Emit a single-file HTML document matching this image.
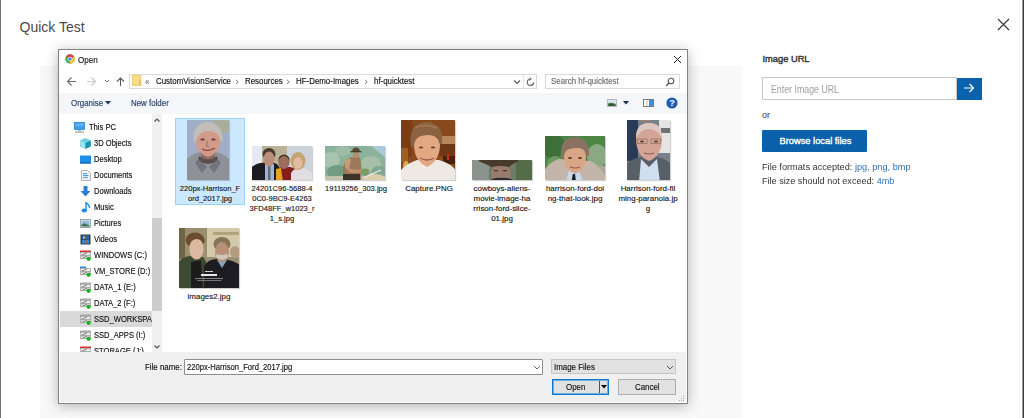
<!DOCTYPE html>
<html><head><meta charset="utf-8">
<style>
*{margin:0;padding:0;box-sizing:border-box}
html,body{width:1024px;height:418px;overflow:hidden;background:#fff}
body{position:relative;font-family:"Liberation Sans",sans-serif;color:#000}
.a{position:absolute}
.t{position:absolute;white-space:nowrap;line-height:1}
.d{font-size:8.6px;color:#111;transform:scaleX(.92);transform-origin:0 0;-webkit-text-stroke:.15px currentColor}
.nav{position:absolute;left:0;top:0;width:1024px;height:418px;clip-path:inset(114px 872px 66px 59px)}
.nav .t{font-size:8.6px;color:#111;transform:scaleX(.88);transform-origin:0 0;-webkit-text-stroke:.15px currentColor}
.fn{position:absolute;width:72px;text-align:center;font-size:7.6px;line-height:10px;color:#111;-webkit-text-stroke:.12px currentColor}
</style></head><body>
<!-- page edges -->
<div class="a" style="left:0;top:0;width:1px;height:418px;background:#727272"></div>
<div class="a" style="left:1022px;top:0;width:1px;height:418px;background:#9a9a9a"></div>
<div class="a" style="left:1023px;top:0;width:1px;height:418px;background:#3c3c3c"></div>

<div class="t" style="left:19.5px;top:20px;font-size:14px;color:#4a4a4a">Quick Test</div>
<svg class="a" style="left:997px;top:18px" width="13" height="13" viewBox="0 0 13 13"><path d="M1 1L12 12M12 1L1 12" stroke="#333" stroke-width="1.1" fill="none"/></svg>

<!-- gray body area -->
<div class="a" style="left:40px;top:66px;width:702px;height:352px;background:#f8f8f8"></div>

<!-- right panel -->
<div class="t" style="left:762.5px;top:54.6px;font-size:9.3px;color:#333;-webkit-text-stroke:.4px #333">Image URL</div>
<div class="a" style="left:762px;top:77px;width:195px;height:23px;border:1px solid #c8c8c8;background:#fff"></div>
<div class="t" style="left:771px;top:85px;font-size:10px;color:#a0a0a0;transform:scaleX(.88);transform-origin:0 0">Enter Image URL</div>
<div class="a" style="left:957px;top:78px;width:25px;height:22px;background:#0b62aa"></div>
<svg class="a" style="left:963px;top:83px" width="12" height="10" viewBox="0 0 12 10"><path d="M1 5H10.5M6.5 1L10.5 5L6.5 9" stroke="#fff" stroke-width="1.2" fill="none"/></svg>
<div class="t" style="left:762px;top:111px;font-size:9px;color:#333">or</div>
<div class="a" style="left:762px;top:130px;width:105px;height:22px;background:#0b62aa;border-radius:1px"></div>
<div class="t" style="left:779.5px;top:137px;font-size:9.3px;color:#fff;-webkit-text-stroke:.35px #fff">Browse local files</div>
<div class="t" style="left:762px;top:162.3px;font-size:9.9px;color:#333;transform:scaleX(.93);transform-origin:0 0">File formats accepted: <span style="color:#2f6fb5">jpg, png, bmp</span></div>
<div class="t" style="left:762px;top:175.6px;font-size:9.9px;color:#333;transform:scaleX(.92);transform-origin:0 0">File size should not exceed: <span style="color:#2f6fb5">4mb</span></div>

<!-- DIALOG -->
<div class="a" style="left:58px;top:49px;width:630px;height:355px;background:#fff;border:1px solid #828282;box-shadow:0 2px 12px rgba(0,0,0,.28)"></div>
<!-- chrome icon -->
<svg class="a" style="left:64.5px;top:54.3px" width="10" height="10" viewBox="0 0 22 22">
<circle cx="11" cy="11" r="10.5" fill="#4caf50"/>
<path d="M11 11 L2 6 A10.5 10.5 0 0 1 20.1 6 Z" fill="#db4437"/>
<path d="M11 11 L20.1 6 A10.5 10.5 0 0 1 11 21.5 Z" fill="#fbc02d"/>
<circle cx="11" cy="11" r="5" fill="#fff"/><circle cx="11" cy="11" r="3.8" fill="#4285f4"/>
</svg>
<div class="t d" style="left:78px;top:55px;font-size:9.8px;transform:scaleX(.82)">Open</div>
<svg class="a" style="left:673px;top:55px" width="9" height="9" viewBox="0 0 9 9"><path d="M1 1L8 8M8 1L1 8" stroke="#222" stroke-width="1" fill="none"/></svg>

<!-- nav buttons -->
<svg class="a" style="left:66px;top:76px" width="62" height="11" viewBox="0 0 62 11">
<path d="M1.5 5.5H10M5.5 1.5L1.5 5.5L5.5 9.5" stroke="#6b6b6b" stroke-width="1.1" fill="none"/>
<path d="M21 5.5H29.5M25.5 1.5L29.5 5.5L25.5 9.5" stroke="#c8c8c8" stroke-width="1.1" fill="none"/>
<path d="M39 4L41 6L43 4" stroke="#6b6b6b" stroke-width="1" fill="none"/>
<path d="M54.5 10V2M51 5.5L54.5 2L58 5.5" stroke="#5a5a5a" stroke-width="1.1" fill="none"/>
</svg>
<!-- address box -->
<div class="a" style="left:129px;top:74px;width:408px;height:15px;border:1px solid #d9d9d9;background:#fff"></div>
<div class="a" style="left:523px;top:75px;width:1px;height:13px;background:#e3e3e3"></div>
<svg class="a" style="left:132px;top:75px" width="10" height="11" viewBox="0 0 10 11"><rect x="0.3" y="0.3" width="8.6" height="10.4" fill="#f9dc88" stroke="#e6c062" stroke-width=".6"/><rect x="7.2" y="4.5" width="1.7" height="6.2" fill="#e8bf55"/></svg>
<div class="t d" style="left:145px;top:78px;color:#6b6b6b">«</div>
<div class="t d" style="left:156px;top:77px">CustomVisionService</div>
<svg class="a" style="left:235px;top:79px" width="5" height="6" viewBox="0 0 5 6"><path d="M1 0.8L3.2 2.9L1 5" stroke="#666" stroke-width=".9" fill="none"/></svg>
<div class="t d" style="left:245px;top:77px">Resources</div>
<svg class="a" style="left:286px;top:79px" width="5" height="6" viewBox="0 0 5 6"><path d="M1 0.8L3.2 2.9L1 5" stroke="#666" stroke-width=".9" fill="none"/></svg>
<div class="t d" style="left:296px;top:77px">HF-Demo-Images</div>
<svg class="a" style="left:364px;top:79px" width="5" height="6" viewBox="0 0 5 6"><path d="M1 0.8L3.2 2.9L1 5" stroke="#666" stroke-width=".9" fill="none"/></svg>
<div class="t d" style="left:374px;top:77px">hf-quicktest</div>
<svg class="a" style="left:513px;top:79px" width="8" height="6" viewBox="0 0 8 6"><path d="M1 1.5L4 4.5L7 1.5" stroke="#555" stroke-width="1.1" fill="none"/></svg>
<svg class="a" style="left:526px;top:77px" width="9" height="10" viewBox="0 0 9 10"><path d="M4.5 2A3.2 3.2 0 1 0 7.7 5.4" stroke="#666" stroke-width="1.1" fill="none"/><path d="M3.5 0.5L5.3 2L3.5 3.5" stroke="#666" fill="none"/></svg>
<!-- search box -->
<div class="a" style="left:545px;top:74px;width:135px;height:15px;border:1px solid #d9d9d9;background:#fff"></div>
<div class="t d" style="left:551px;top:77px;color:#6d6d6d">Search hf-quicktest</div>
<svg class="a" style="left:665px;top:77px" width="10" height="10" viewBox="0 0 10 10"><circle cx="6" cy="4" r="2.8" stroke="#555" stroke-width="1.1" fill="none"/><path d="M4 6L1 9" stroke="#555" stroke-width="1.3"/></svg>

<!-- command bar -->
<div class="a" style="left:59px;top:93px;width:628px;height:21px;background:#f4f6f9"></div>
<div class="t d" style="left:71px;top:99px;color:#1e3a5f">Organise</div>
<svg class="a" style="left:105px;top:101px" width="6" height="4" viewBox="0 0 6 4"><path d="M0 0H6L3 3.5Z" fill="#1e3a5f"/></svg>
<div class="t d" style="left:131px;top:99px;color:#1e3a5f">New folder</div>
<svg class="a" style="left:607px;top:99px" width="10" height="8" viewBox="0 0 10 8"><rect x="0.5" y="0.5" width="9" height="7" fill="#f4f4f4" stroke="#b8b8b8"/><rect x="1.2" y="1.2" width="7.6" height="5.6" fill="#cfe6f8"/><path d="M1.2 4.2Q4 3 8.8 5V6.8H1.2Z" fill="#4a7a4a"/><path d="M1.2 5.5Q4 4.8 8.8 6.2V6.8H1.2Z" fill="#2a4a2a"/></svg>
<svg class="a" style="left:623px;top:101px" width="6" height="4" viewBox="0 0 6 4"><path d="M0 0H6L3 3.5Z" fill="#1b2e4a"/></svg>
<svg class="a" style="left:643px;top:99px" width="11" height="8" viewBox="0 0 11 8"><rect x="0.5" y="0.5" width="10" height="7" fill="#fff" stroke="#7a7a7a"/><rect x="3" y="1" width="2" height="6" fill="#e0e0e0"/><rect x="6" y="1" width="4" height="6" fill="#3d8fe0"/></svg>
<svg class="a" style="left:666px;top:97px" width="12" height="12" viewBox="0 0 12 12"><circle cx="6" cy="6" r="5.6" fill="#1a5fb4"/><text x="6" y="9.3" font-family="Liberation Sans" font-weight="bold" font-size="9" fill="#fff" text-anchor="middle">?</text></svg>

<!-- nav pane -->
<div class="a" style="left:152px;top:114px;width:10px;height:238px;background:#f0f0f0"></div>
<div class="a" style="left:152px;top:218px;width:10px;height:93px;background:#cdcdcd"></div>
<svg class="a" style="left:154px;top:118px" width="6" height="4" viewBox="0 0 6 4"><path d="M0.5 3.5L3 1L5.5 3.5" stroke="#555" stroke-width="1.2" fill="none"/></svg>
<svg class="a" style="left:154px;top:345px" width="6" height="4" viewBox="0 0 6 4"><path d="M0.5 0.5L3 3L5.5 0.5" stroke="#555" stroke-width="1.2" fill="none"/></svg>
<div class="a" style="left:60px;top:311px;width:92px;height:16px;background:#d9d9d9"></div>
<div class="nav">
<svg class="a" style="left:74px;top:122px" width="11" height="11" viewBox="0 0 11 11"><rect x="0.5" y="0.5" width="10" height="7" fill="#3aa0f0" stroke="#2680c8" stroke-width="0.8"/><rect x="1.5" y="1.5" width="8" height="2.5" fill="#7cc4ff" opacity=".6"/><rect x="4" y="8" width="3" height="1.2" fill="#b8c4cc"/><rect x="1" y="9.3" width="9" height="1.5" fill="#a8b4bc"/></svg>
<div class="t" style="left:89px;top:119px;line-height:16px">This PC</div>
<svg class="a" style="left:80px;top:138px" width="11" height="11" viewBox="0 0 11 11"><path d="M5.5 0.3L10.6 2.6V8.4L5.5 10.7L0.4 8.4V2.6Z" fill="#2bb0c8"/><path d="M0.4 2.6L5.5 4.9V10.7L0.4 8.4Z" fill="#9fe3ee"/><path d="M5.5 4.9L10.6 2.6V8.4L5.5 10.7Z" fill="#1394b0"/><path d="M0.4 2.6L5.5 0.3L10.6 2.6L5.5 4.9Z" fill="#6fd4e4"/></svg>
<div class="t" style="left:94px;top:135px;line-height:16px">3D Objects</div>
<svg class="a" style="left:80px;top:154px" width="11" height="11" viewBox="0 0 11 11"><rect x="0" y="1.5" width="11" height="8" fill="#1e8fe6"/><rect x="0" y="8.3" width="11" height="1.2" fill="#0f63b0"/></svg>
<div class="t" style="left:94px;top:151px;line-height:16px">Desktop</div>
<svg class="a" style="left:81px;top:170px" width="10" height="11" viewBox="0 0 10 11"><path d="M0.5 0.5H6.5L9.5 3.5V10.5H0.5Z" fill="#f4f4f4" stroke="#a0a0a0" stroke-width="0.8"/><rect x="2" y="3" width="4" height="1.2" fill="#4aa0e0"/><rect x="2" y="5" width="5.5" height="1.2" fill="#4aa0e0"/><rect x="2" y="7" width="5" height="1.2" fill="#60b0e8"/></svg>
<div class="t" style="left:94px;top:167px;line-height:16px">Documents</div>
<svg class="a" style="left:80px;top:186px" width="11" height="11" viewBox="0 0 11 11"><path d="M3.5 0H7.5V5H10.5L5.5 10.5L0.5 5H3.5Z" fill="#2a7fd4"/></svg>
<div class="t" style="left:94px;top:183px;line-height:16px">Downloads</div>
<svg class="a" style="left:81px;top:202px" width="10" height="11" viewBox="0 0 10 11"><ellipse cx="3.2" cy="8.6" rx="2.6" ry="2" fill="#1a8ae6"/><path d="M5 8.5V0.5C6.5 2.5 8.8 3 8.5 6" stroke="#1a8ae6" stroke-width="1.4" fill="none"/></svg>
<div class="t" style="left:94px;top:199px;line-height:16px">Music</div>
<svg class="a" style="left:80px;top:218px" width="11" height="11" viewBox="0 0 11 11"><rect x="0.5" y="1.5" width="10" height="8" fill="#f0f0f0" stroke="#909090" stroke-width="0.8"/><rect x="1.5" y="2.5" width="8" height="6" fill="#8ec0e8"/><path d="M1.5 6.5L4.5 5.2L9.5 7.5V8.5H1.5Z" fill="#3a7a5a"/></svg>
<div class="t" style="left:94px;top:215px;line-height:16px">Pictures</div>
<svg class="a" style="left:80px;top:234px" width="11" height="11" viewBox="0 0 11 11"><rect x="0.5" y="0.5" width="10" height="10" fill="#3a3a3a"/><rect x="2" y="1.5" width="7" height="3.8" fill="#1e6ab8"/><rect x="2" y="5.8" width="7" height="3.8" fill="#2a88d8"/><rect x="3" y="2.5" width="2" height="2" fill="#e0c040"/><rect x="5.5" y="6.5" width="2" height="2" fill="#d04a30"/></svg>
<div class="t" style="left:94px;top:231px;line-height:16px">Videos</div>
<svg class="a" style="left:80px;top:250px" width="11" height="11" viewBox="0 0 11 11"><rect x="0" y="0.5" width="11" height="1.6" fill="#e03030"/><rect x="0.5" y="2.5" width="10" height="3" fill="#ececec" stroke="#9a9a9a" stroke-width="0.7"/><rect x="0.5" y="5.8" width="10" height="3" fill="#e2e2e2" stroke="#9a9a9a" stroke-width="0.7"/><path d="M2 5L7 3M2 8.3L7 6.3" stroke="#6a6a6a" stroke-width="0.8"/><circle cx="8.6" cy="8.8" r="2.1" fill="#13b513"/></svg>
<div class="t" style="left:94px;top:247px;line-height:16px">WINDOWS (C:)</div>
<svg class="a" style="left:80px;top:266px" width="11" height="11" viewBox="0 0 11 11"><rect x="0" y="0.5" width="6" height="1.6" fill="#2a8ad0"/><rect x="0.5" y="2.5" width="10" height="3" fill="#ececec" stroke="#9a9a9a" stroke-width="0.7"/><rect x="0.5" y="5.8" width="10" height="3" fill="#e2e2e2" stroke="#9a9a9a" stroke-width="0.7"/><path d="M2 5L7 3M2 8.3L7 6.3" stroke="#6a6a6a" stroke-width="0.8"/><circle cx="8.6" cy="8.8" r="2.1" fill="#13b513"/></svg>
<div class="t" style="left:94px;top:263px;line-height:16px">VM_STORE (D:)</div>
<svg class="a" style="left:80px;top:282px" width="11" height="11" viewBox="0 0 11 11"><rect x="0" y="0.5" width="11" height="1.6" fill="#a8a8a8"/><rect x="0.5" y="2.5" width="10" height="3" fill="#ececec" stroke="#9a9a9a" stroke-width="0.7"/><rect x="0.5" y="5.8" width="10" height="3" fill="#e2e2e2" stroke="#9a9a9a" stroke-width="0.7"/><path d="M2 5L7 3M2 8.3L7 6.3" stroke="#6a6a6a" stroke-width="0.8"/><circle cx="8.6" cy="8.8" r="2.1" fill="#13b513"/></svg>
<div class="t" style="left:94px;top:279px;line-height:16px">DATA_1 (E:)</div>
<svg class="a" style="left:80px;top:298px" width="11" height="11" viewBox="0 0 11 11"><rect x="0" y="0.5" width="11" height="1.6" fill="#a8a8a8"/><rect x="0.5" y="2.5" width="10" height="3" fill="#ececec" stroke="#9a9a9a" stroke-width="0.7"/><rect x="0.5" y="5.8" width="10" height="3" fill="#e2e2e2" stroke="#9a9a9a" stroke-width="0.7"/><path d="M2 5L7 3M2 8.3L7 6.3" stroke="#6a6a6a" stroke-width="0.8"/><circle cx="8.6" cy="8.8" r="2.1" fill="#13b513"/></svg>
<div class="t" style="left:94px;top:295px;line-height:16px">DATA_2 (F:)</div>
<svg class="a" style="left:80px;top:314px" width="11" height="11" viewBox="0 0 11 11"><rect x="0" y="0.5" width="11" height="1.6" fill="#a8a8a8"/><rect x="0.5" y="2.5" width="10" height="3" fill="#ececec" stroke="#9a9a9a" stroke-width="0.7"/><rect x="0.5" y="5.8" width="10" height="3" fill="#e2e2e2" stroke="#9a9a9a" stroke-width="0.7"/><path d="M2 5L7 3M2 8.3L7 6.3" stroke="#6a6a6a" stroke-width="0.8"/><circle cx="8.6" cy="8.8" r="2.1" fill="#13b513"/></svg>
<div class="t" style="left:94px;top:311px;line-height:16px">SSD_WORKSPAC</div>
<svg class="a" style="left:80px;top:330px" width="11" height="11" viewBox="0 0 11 11"><rect x="0" y="0.5" width="11" height="1.6" fill="#a8a8a8"/><rect x="0.5" y="2.5" width="10" height="3" fill="#ececec" stroke="#9a9a9a" stroke-width="0.7"/><rect x="0.5" y="5.8" width="10" height="3" fill="#e2e2e2" stroke="#9a9a9a" stroke-width="0.7"/><path d="M2 5L7 3M2 8.3L7 6.3" stroke="#6a6a6a" stroke-width="0.8"/><circle cx="8.6" cy="8.8" r="2.1" fill="#13b513"/></svg>
<div class="t" style="left:94px;top:327px;line-height:16px">SSD_APPS (I:)</div>
<svg class="a" style="left:80px;top:346px" width="11" height="11" viewBox="0 0 11 11"><rect x="0" y="0.5" width="11" height="1.6" fill="#e03030"/><rect x="0.5" y="2.5" width="10" height="3" fill="#ececec" stroke="#9a9a9a" stroke-width="0.7"/><rect x="0.5" y="5.8" width="10" height="3" fill="#e2e2e2" stroke="#9a9a9a" stroke-width="0.7"/><path d="M2 5L7 3M2 8.3L7 6.3" stroke="#6a6a6a" stroke-width="0.8"/><circle cx="8.6" cy="8.8" r="2.1" fill="#13b513"/></svg>
<div class="t" style="left:94px;top:343px;line-height:16px">STORAGE (J:)</div>
</div>
<!-- endnav -->

<!-- content files -->
<div id="files">
<div class="a" style="left:175px;top:118px;width:70px;height:87px;background:#cce8ff;border:1px solid #99d1ff"></div>
<svg class="a" style="left:187px;top:120px;box-shadow:1px 1px 1px rgba(0,0,0,.18)" width="42" height="60" viewBox="0 0 42 60"><defs><filter id="f1" x="-10%" y="-10%" width="120%" height="120%"><feGaussianBlur stdDeviation="0.7"/></filter><clipPath id="cf1"><rect width="42" height="60"/></clipPath></defs><g clip-path="url(#cf1)"><g filter="url(#f1)"><rect x="-3" y="-3" width="48" height="66" fill="#a0aec6"/>
<rect x="27" y="-3" width="18" height="16" fill="#a9ad9c"/>
<path d="M-2 62 V41 Q4 34 13 32 L29 32 Q38 34 44 41 V62Z" fill="#8f9199"/>
<path d="M14 30 H28 V38 Q21 42 14 38Z" fill="#8c6a5e"/>
<path d="M12 36 Q21 43 30 36 L31 41 Q21 47 11 41Z" fill="#5a5050"/>
<path d="M11 39 L20 47 L15 53 L8 43Z" fill="#72747c"/><path d="M31 39 L22 47 L27 53 L34 43Z" fill="#72747c"/>
<path d="M9 22 Q9 8 21 8 Q33 8 33 22 Q33 33 21 37 Q9 33 9 22Z" fill="#d29a88"/>
<path d="M7 24 Q4 4 20 2 Q36 2 36 22 L33 20 Q31 11 22 11 Q13 11 10 19Z" fill="#c2bdb8"/>
<ellipse cx="15.5" cy="19.5" rx="2.2" ry="1.1" fill="#5a3a34"/><ellipse cx="26.5" cy="19.5" rx="2.2" ry="1.1" fill="#5a3a34"/>
<path d="M20.5 21 L19 26 L22 26.5" stroke="#9a6858" stroke-width=".9" fill="none"/>
<path d="M15 29 Q21 32 28 28" stroke="#7a4438" stroke-width="1.3" fill="none"/></g></g></svg>
<svg class="a" style="left:252px;top:146px;box-shadow:1px 1px 1px rgba(0,0,0,.18)" width="60" height="34" viewBox="0 0 60 34"><defs><filter id="f2" x="-10%" y="-10%" width="120%" height="120%"><feGaussianBlur stdDeviation="0.7"/></filter><clipPath id="cf2"><rect width="60" height="34"/></clipPath></defs><g clip-path="url(#cf2)"><g filter="url(#f2)"><rect x="-3" y="-3" width="66" height="40" fill="#cdd3da"/>
<rect x="-3" y="-3" width="13" height="40" fill="#e6eaf0"/>
<rect x="10" y="-3" width="25" height="40" fill="#b9b198"/>
<path d="M-2 36 V22 Q6 16 14 17 L22 17 Q27 18 28 24 V36Z" fill="#1a1a20"/>
<rect x="13" y="18" width="9" height="17" fill="#9fb5d5"/>
<rect x="16" y="20" width="2.5" height="14" fill="#666a72"/>
<ellipse cx="17" cy="8" rx="6.5" ry="6" fill="#4a3a30"/>
<ellipse cx="17" cy="13" rx="5.5" ry="7.5" fill="#b98f7c"/>
<path d="M24 36 V24 Q28 20 33 21 L38 21 Q44 22 46 27 V36Z" fill="#861c1c"/>
<path d="M24 36 V23 L29 22 L31 36Z" fill="#e2a424"/>
<ellipse cx="32" cy="14" rx="5.5" ry="5.5" fill="#3a302a"/>
<ellipse cx="32" cy="16.5" rx="5.5" ry="6.5" fill="#9a6e5a"/>
<path d="M39 36 V27 Q42 22 48 22 Q56 22 60 27 V36Z" fill="#e2dde2"/>
<ellipse cx="46" cy="15" rx="7.5" ry="9" fill="#c6a472"/>
<ellipse cx="46" cy="17" rx="4.5" ry="6" fill="#e2baa0"/></g></g></svg>
<svg class="a" style="left:325px;top:146px;box-shadow:1px 1px 1px rgba(0,0,0,.18)" width="60" height="34" viewBox="0 0 60 34"><defs><filter id="f3" x="-10%" y="-10%" width="120%" height="120%"><feGaussianBlur stdDeviation="0.7"/></filter><clipPath id="cf3"><rect width="60" height="34"/></clipPath></defs><g clip-path="url(#cf3)"><g filter="url(#f3)"><rect x="-3" y="-3" width="66" height="40" fill="#8db29c"/>
<ellipse cx="6" cy="14" rx="9" ry="8" fill="#a9c4ae"/>
<ellipse cx="12" cy="26" rx="10" ry="7" fill="#6f9c82"/>
<ellipse cx="46" cy="18" rx="10" ry="8" fill="#a6c0a8"/>
<ellipse cx="54" cy="26" rx="8" ry="6" fill="#7ea890"/>
<ellipse cx="18" cy="5" rx="8" ry="5" fill="#9ebca6"/>
<path d="M42 -3 H63 V14 Q54 6 42 -3Z" fill="#a8c8dc"/>
<rect x="-3" y="30" width="66" height="7" fill="#c2c2a8"/>
<path d="M38 34 L46 27 Q54 28 62 31 V36 H38Z" fill="#dccdab"/>
<path d="M18 34 V21 Q21 12 27 11 L34 11 Q37 15 36 24 L36 34Z" fill="#9b7a5c"/>
<path d="M20 14 Q23 12 26 13 L24 24 Q21 24 20 20Z" fill="#c89a78"/>
<path d="M23 22 Q30 25 44 23 L44 25.5 Q30 28 23 26Z" fill="#c09070"/>
<ellipse cx="40" cy="26" rx="4" ry="3.5" fill="#6a9a58" opacity=".8"/>
<rect x="18" y="28" width="17" height="7" fill="#3e3026"/>
<ellipse cx="31" cy="9" rx="2.8" ry="3.3" fill="#b88c6c"/>
<path d="M27 5.5 Q27.5 1.5 31 1.5 Q34.5 1.5 35 5.5Z" fill="#5a4634"/>
<rect x="25.5" y="5" width="11" height="1.3" fill="#4a3a2c"/>
<path d="M38 32 L56 24" stroke="#e8ecec" stroke-width="1.1"/></g></g></svg>
<svg class="a" style="left:401px;top:120px;box-shadow:1px 1px 1px rgba(0,0,0,.18)" width="54" height="60" viewBox="0 0 54 60"><defs><filter id="f4" x="-10%" y="-10%" width="120%" height="120%"><feGaussianBlur stdDeviation="0.7"/></filter><clipPath id="cf4"><rect width="54" height="60"/></clipPath></defs><g clip-path="url(#cf4)"><g filter="url(#f4)"><rect x="-3" y="-3" width="60" height="66" fill="#8a4a1a"/>
<rect x="36" y="16" width="21" height="8" fill="#b8885a"/>
<rect x="36" y="24" width="21" height="12" fill="#6e3814"/>
<rect x="-3" y="-3" width="14" height="40" fill="#7a3e14"/>
<rect x="-3" y="28" width="10" height="14" fill="#9a6028"/>
<ellipse cx="5" cy="46" rx="3" ry="5" fill="#e0a848"/>
<rect x="42" y="36" width="15" height="8" fill="#4a2410"/>
<rect x="46" y="34" width="2" height="6" fill="#c03020"/>
<path d="M-2 62 V52 Q6 43 16 40 L38 40 Q50 43 56 52 V62Z" fill="#efe9e4"/>
<path d="M13 24 Q13 12 26 12 Q39 12 39 24 Q39 41 26 47 Q13 41 13 24Z" fill="#e2a882"/>
<path d="M10 27 Q6 4 25 2 Q43 2 41 25 L38 23 Q37 15 27 15 Q17 15 14 21 L12 28Z" fill="#8b6242"/>
<path d="M14 8 Q24 3 36 8" stroke="#a87a52" stroke-width="1.6" fill="none"/>
<ellipse cx="20" cy="27.5" rx="2.2" ry="1.1" fill="#6a4030"/><ellipse cx="32" cy="27.5" rx="2.2" ry="1.1" fill="#6a4030"/>
<path d="M19 38 Q26 42 33 38" stroke="#a05848" stroke-width="1.4" fill="none"/></g></g></svg>
<svg class="a" style="left:472px;top:160px;box-shadow:1px 1px 1px rgba(0,0,0,.18)" width="60" height="20" viewBox="0 0 60 20"><defs><filter id="f5" x="-10%" y="-10%" width="120%" height="120%"><feGaussianBlur stdDeviation="0.7"/></filter><clipPath id="cf5"><rect width="60" height="20"/></clipPath></defs><g clip-path="url(#cf5)"><g filter="url(#f5)"><rect x="-3" y="-3" width="66" height="26" fill="#6e7d68"/>
<rect x="-3" y="-3" width="20" height="26" fill="#8b948c"/>
<rect x="44" y="-3" width="19" height="26" fill="#546c48"/>
<ellipse cx="29" cy="14" rx="10" ry="10" fill="#9a7c6c"/>
<path d="M6 1 Q10 -2 28 -1 Q44 -2 47 1 Q40 4 37 7 Q28 5 20 7 Q14 4 6 1Z" fill="#4a3a2c"/>
<rect x="22" y="10" width="4" height="1.3" fill="#4a3830"/><rect x="31" y="10" width="4" height="1.3" fill="#4a3830"/>
<path d="M16 22 Q22 17 29 18 Q38 17 44 22Z" fill="#2c2a30"/></g></g></svg>
<svg class="a" style="left:545px;top:136px;box-shadow:1px 1px 1px rgba(0,0,0,.18)" width="60" height="44" viewBox="0 0 60 44"><defs><filter id="f6" x="-10%" y="-10%" width="120%" height="120%"><feGaussianBlur stdDeviation="0.7"/></filter><clipPath id="cf6"><rect width="60" height="44"/></clipPath></defs><g clip-path="url(#cf6)"><g filter="url(#f6)"><rect x="-3" y="-3" width="66" height="50" fill="#4f8446"/>
<ellipse cx="8" cy="10" rx="12" ry="12" fill="#3e7038"/>
<ellipse cx="10" cy="28" rx="8" ry="8" fill="#6a9a5e"/>
<ellipse cx="52" cy="20" rx="10" ry="12" fill="#8aa882"/>
<rect x="48" y="30" width="14" height="16" fill="#a8a898"/>
<path d="M-2 46 V36 Q4 26 14 23 L46 25 Q54 29 60 40 V46Z" fill="#c4b5aa"/>
<path d="M21 46 L24 34 L34 34 L38 46Z" fill="#cad9ea"/>
<path d="M26.5 46 L27.8 38 L30 38 L31 46Z" fill="#1c1c28"/>
<path d="M19 21 Q19 9 30 9 Q41 9 41 21 Q41 34 30 38 Q19 34 19 21Z" fill="#d8a686"/>
<path d="M16 22 Q14 2 30 1 Q45 2 44 20 L41 19 Q40 11 31 12 Q21 12 19 18 L18 23Z" fill="#8a7262"/>
<ellipse cx="25" cy="22" rx="2" ry="1" fill="#5a3a2a"/><ellipse cx="35" cy="22" rx="2" ry="1" fill="#5a3a2a"/>
<path d="M25 31 Q30 33 35 31" stroke="#9a5a48" stroke-width="1.1" fill="none"/></g></g></svg>
<svg class="a" style="left:627px;top:120px;box-shadow:1px 1px 1px rgba(0,0,0,.18)" width="43" height="60" viewBox="0 0 43 60"><defs><filter id="f7" x="-10%" y="-10%" width="120%" height="120%"><feGaussianBlur stdDeviation="0.7"/></filter><clipPath id="cf7"><rect width="43" height="60"/></clipPath></defs><g clip-path="url(#cf7)"><g filter="url(#f7)"><rect x="-3" y="-3" width="50" height="66" fill="#7a8088"/>
<rect x="-3" y="-3" width="14" height="44" fill="#2c3a58"/>
<rect x="32" y="-3" width="14" height="36" fill="#e4e4e2"/>
<rect x="34" y="8" width="12" height="5" fill="#707070"/>
<ellipse cx="18" cy="-1" rx="6" ry="3" fill="#a08070"/>
<path d="M-2 62 V45 Q6 38 14 37 L30 37 Q40 39 45 45 V62Z" fill="#585e66"/>
<path d="M12 62 L14 39 L22 47 L30 39 L33 62Z" fill="#cfdff0"/>
<path d="M9 18 Q9 3 22 3 Q35 3 35 18 Q35 36 22 41 Q9 36 9 18Z" fill="#d4a596"/>
<path d="M9 18 Q9 3 22 3 Q35 3 35 18 Q30 9 22 9 Q14 9 9 18Z" fill="#dcc8c0"/>
<path d="M10 19 H20 V23.5 H11Z M24 19 H34 L33 23.5 H24Z" fill="none" stroke="#8a6a5a" stroke-width=".7"/>
<ellipse cx="15" cy="21.5" rx="2" ry="1" fill="#5a3a30"/><ellipse cx="29" cy="21.5" rx="2" ry="1" fill="#5a3a30"/>
<path d="M17 33 Q22 35 27 33" stroke="#8a5a50" stroke-width="1.2" fill="none"/></g></g></svg>
<svg class="a" style="left:179px;top:228px;box-shadow:1px 1px 1px rgba(0,0,0,.18)" width="60" height="60" viewBox="0 0 60 60"><defs><filter id="f8" x="-10%" y="-10%" width="120%" height="120%"><feGaussianBlur stdDeviation="0.7"/></filter><clipPath id="cf8"><rect width="60" height="60"/></clipPath></defs><g clip-path="url(#cf8)"><g filter="url(#f8)"><rect x="-3" y="-3" width="66" height="66" fill="#9a8f6e"/>
<rect x="28" y="-3" width="35" height="32" fill="#d2c9a8"/>
<rect x="34" y="4" width="29" height="3" fill="#b0a47c"/>
<rect x="-3" y="-3" width="9" height="34" fill="#6e6544"/>
<ellipse cx="56" cy="24" rx="5" ry="6" fill="#b89a80"/>
<path d="M-2 62 V36 Q4 28 12 28 L24 29 Q30 34 30 62Z" fill="#3d4a32"/>
<path d="M12 62 V34 L22 32 L24 62Z" fill="#1c1e1a"/>
<path d="M25 62 V38 Q30 30 40 31 Q54 31 62 38 V62Z" fill="#1e1e20"/>
<path d="M38 32 L43 40 L48 32Z" fill="#8aa0b8"/>
<ellipse cx="16" cy="12" rx="9.5" ry="7.5" fill="#6b4e2e"/>
<ellipse cx="17.5" cy="21" rx="7.2" ry="10.5" fill="#dcbaa2"/>
<path d="M9 16 Q10 8 17 8 Q26 8 26 15 Q22 11 17 11 Q12 12 9 16Z" fill="#6b4e2e"/>
<ellipse cx="43" cy="16" rx="8.5" ry="7" fill="#857458"/>
<ellipse cx="43" cy="24" rx="7" ry="10" fill="#b89074"/>
<path d="M37 29 Q43 35 49 29 L48.5 26 Q43 28 37.5 26Z" fill="#cfc6bc"/>
<rect x="26" y="43" width="8" height="1" fill="#d0d0d0"/>
<rect x="22" y="46" width="16" height="2" fill="#e8e8e8"/>
<rect x="16" y="50" width="28" height="0.8" fill="#9a9a9a"/>
<rect x="18" y="52" width="24" height="0.8" fill="#8a8a8a"/></g></g></svg>
<div class="fn" style="left:174px;top:184px;font-size:7.55px">220px-Harrison_F<br>ord_2017.jpg</div>
<div class="fn" style="left:246px;top:184px;font-size:7.55px">24201C96-5688-4<br>0C0-9BC9-E4263<br>3FD48FF_w1023_r<br>1_s.jpg</div>
<div class="fn" style="left:320px;top:184px;font-size:7.55px">19119256_303.jpg</div>
<div class="fn" style="left:393px;top:184px;font-size:7.95px">Capture.PNG</div>
<div class="fn" style="left:466px;top:184px;font-size:7.95px">cowboys-aliens-<br>movie-image-ha<br>rrison-ford-slice-<br>01.jpg</div>
<div class="fn" style="left:539px;top:184px;font-size:7.95px">harrison-ford-doi<br>ng-that-look.jpg</div>
<div class="fn" style="left:612px;top:184px;font-size:7.95px">Harrison-ford-fil<br>ming-paranoia.jp<br>g</div>
<div class="fn" style="left:173px;top:292px;font-size:7.95px">images2.jpg</div>
</div>
<!-- endfiles -->

<!-- footer -->
<div class="a" style="left:60px;top:352px;width:626px;height:50px;background:#f0f0f0"></div>
<div class="t d" style="left:145px;top:363px">File name:</div>
<div class="a" style="left:184px;top:359px;width:359px;height:16px;border:1px solid #8e8e8e;background:#fff;border-radius:1px"></div>
<div class="t d" style="left:187px;top:363px;transform:scaleX(.885)">220px-Harrison_Ford_2017.jpg</div>
<svg class="a" style="left:533px;top:365px" width="8" height="5" viewBox="0 0 8 5"><path d="M1 1L4 4L7 1" stroke="#666" fill="none"/></svg>
<div class="a" style="left:551px;top:359px;width:125px;height:15px;border:1px solid #c6c6c6;background:#e1e1e1"></div>
<div class="t d" style="left:554px;top:363px">Image Files</div>
<svg class="a" style="left:666px;top:365px" width="8" height="5" viewBox="0 0 8 5"><path d="M1 1L4 4L7 1" stroke="#555" fill="none"/></svg>
<div class="a" style="left:552px;top:379px;width:57px;height:16px;border:1px solid #0a78d7;box-shadow:inset 0 0 0 1px rgba(10,120,215,.5);background:#e1e1e1"></div>
<div class="a" style="left:599px;top:381px;width:1px;height:12px;background:#505050"></div>
<svg class="a" style="left:601px;top:385px" width="6" height="4" viewBox="0 0 6 4"><path d="M0 0H6L3 3.5Z" fill="#000"/></svg>
<div class="t d" style="left:566px;top:383px">Open</div>
<div class="a" style="left:618px;top:379px;width:58px;height:16px;border:1px solid #adadad;background:#e1e1e1"></div>
<div class="t d" style="left:635px;top:383px">Cancel</div>
<svg class="a" style="left:678px;top:395px" width="7" height="7" viewBox="0 0 7 7"><g fill="#b0b0b0"><rect x="5" y="1" width="1" height="1"/><rect x="3" y="3" width="1" height="1"/><rect x="5" y="3" width="1" height="1"/><rect x="1" y="5" width="1" height="1"/><rect x="3" y="5" width="1" height="1"/><rect x="5" y="5" width="1" height="1"/></g></svg>
</body></html>
